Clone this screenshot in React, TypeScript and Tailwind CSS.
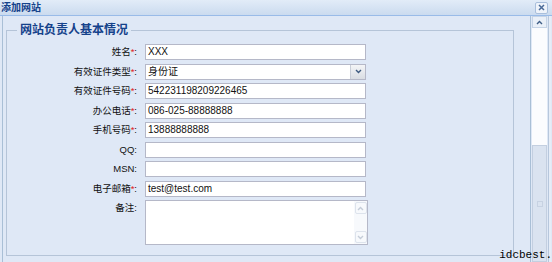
import React from 'react';

interface Field { label: string; required?: boolean; value?: string; kind?: 'text' | 'select' | 'textarea' }

const fields: Field[] = [
  { label: '姓名', required: true, value: 'XXX' },
  { label: '有效证件类型', required: true, value: '身份证', kind: 'select' },
  { label: '有效证件号码', required: true, value: '542231198209226465' },
  { label: '办公电话', required: true, value: '086-025-88888888' },
  { label: '手机号码', required: true, value: '13888888888' },
  { label: 'QQ' },
  { label: 'MSN' },
  { label: '电子邮箱', required: true, value: 'test@test.com' },
  { label: '备注', kind: 'textarea' },
];

function Chevron({ down }: { down?: boolean }) {
  return (
    <svg width="7" height="5" viewBox="0 0 7 5">
      <path d={down ? 'M1 1 L3.5 3.5 L6 1' : 'M1 4 L3.5 1.5 L6 4'} fill="none" stroke="currentColor" strokeWidth="1.4" />
    </svg>
  );
}

function Row({ f }: { f: Field }) {
  const label = (
    <div className="w-[130px] shrink-0 text-right text-[9.5px] leading-[16px] text-[#111]">
      {f.label}
      {f.required && <span className="text-[#e02020]">*</span>}:
    </div>
  );

  if (f.kind === 'textarea') {
    return (
      <div className="flex items-start gap-[8px]">
        {label}
        <div className="flex h-[45px] w-[223px] border border-[#b5b8c8] bg-white">
          <div className="flex-1" />
          <div className="flex w-[13px] flex-col items-center justify-between bg-[#f7f9fc] py-[1px] text-[#c4ccd8]">
            <div className="flex h-[12px] w-[12px] items-center justify-center rounded-[2px] border border-[#dde3ec]"><Chevron /></div>
            <div className="flex h-[12px] w-[12px] items-center justify-center rounded-[2px] border border-[#dde3ec]"><Chevron down /></div>
          </div>
        </div>
      </div>
    );
  }

  return (
    <div className="flex items-center gap-[8px]">
      {label}
      <div className="flex h-[16px] w-[221px] items-center border border-[#b5b8c8] bg-white">
        <span className="flex-1 pl-[2px] text-[10px] leading-none text-[#111]">{f.value}</span>
        {f.kind === 'select' && (
          <div className="flex h-full w-[15px] items-center justify-center border-l border-[#c9ced8] bg-gradient-to-b from-[#f4f5f7] to-[#d9dde3] text-[#3d5a80]">
            <Chevron down />
          </div>
        )}
      </div>
    </div>
  );
}

export default function App() {
  return (
    <div className="relative h-[262px] w-[552px] overflow-hidden bg-[#dfe8f6] font-['Liberation_Sans','Noto_Sans_CJK_SC',sans-serif]">
      {/* title bar */}
      <div className="flex h-[16px] items-center justify-between border-b border-[#99bbe8] bg-gradient-to-b from-[#e2ecf8] to-[#cbdbef] pl-[1px] pr-[4px]">
        <span className="text-[10px] font-bold leading-none text-[#15428b]">添加网站</span>
        <div className="flex h-[12px] w-[13px] items-center justify-center rounded-[2px] border border-[#a9bfdc] bg-[#eef3fa] text-[#4a6a98]">
          <svg width="7" height="7" viewBox="0 0 7 7">
            <path d="M1 1 L6 6 M6 1 L1 6" stroke="currentColor" strokeWidth="1.5" />
          </svg>
        </div>
      </div>

      <div className="flex h-[246px]">
        {/* content */}
        <div className="ml-[2px] w-[529px] border-x border-[#a9bfd6] bg-[#dfe8f6] pl-[3px]">
          <fieldset className="mt-[7px] w-[508px] border border-[#b5c4d8] pb-[10px] pt-[7px]">
            <legend className="ml-[10px] px-[3px] text-[12px] font-bold leading-[14px] text-[#15428b]">网站负责人基本情况</legend>
            <div className="flex flex-col gap-[3.5px]">
              {fields.map(f => <Row key={f.label} f={f} />)}
            </div>
          </fieldset>
        </div>

        {/* scrollbar */}
        <div className="ml-[1px] flex w-[15px] flex-col">
          <div className="flex h-[12px] items-center justify-center border border-[#c6d4e6] bg-[#eaf0f8] text-[#3e5d86]">
            <Chevron />
          </div>
          <div className="h-[117px] bg-[#fbfcfe]" />
          <div className="flex flex-1 items-center justify-center border border-[#c3cfe0] bg-[#dae3f0]">
            <div className="h-[6px] w-[6px] border border-[#c7d2e2]" />
          </div>
        </div>
        <div className="ml-[1px] w-[3px] border-l border-[#b7c7dc] bg-[#e6edf7]" />
      </div>

      <span className="absolute bottom-[1px] right-[0px] font-['Liberation_Mono',monospace] text-[11px] leading-[12px] text-black">idcbest.</span>
    </div>
  );
}
